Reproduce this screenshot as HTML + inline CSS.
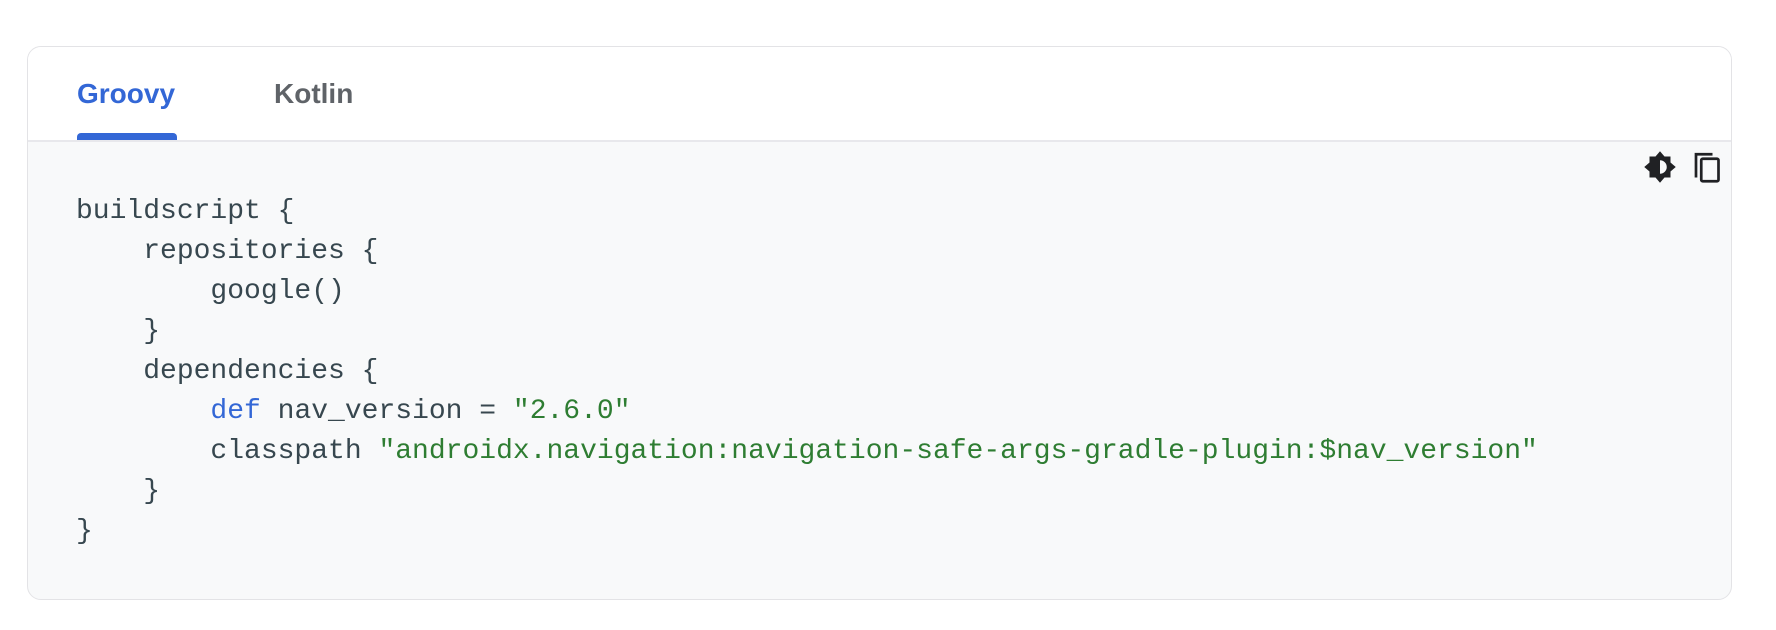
<!DOCTYPE html>
<html><head><style>
body{margin:0;width:1776px;height:630px;background:#fff;position:relative;overflow:hidden}
.card{position:absolute;left:27px;top:46px;width:1705px;height:554px;border:1px solid #e3e3e6;border-radius:14px;overflow:hidden;box-sizing:border-box;background:#f8f9fa}
.tabs{position:absolute;left:0;top:0;right:0;height:95px;box-sizing:border-box;background:#fff;border-bottom:2px solid #e8e8ec}
.tab{position:absolute;top:31px;font:bold 28px "Liberation Sans",sans-serif;}
.g{left:49px;color:#3367d6}
.k{left:246px;color:#5f6368}
.ul{position:absolute;left:49px;top:86px;width:100px;height:7px;background:#3367d6;border-radius:4px 4px 0 0}
pre{position:absolute;left:48px;top:145px;margin:0;font:28px/40px "Liberation Mono",monospace;color:#37474f}
.kw{color:#3367d6}.s{color:#2e7d32}
svg{position:absolute}
</style></head><body>
<div class="card">
<div class="tabs"><div class="tab g">Groovy</div><div class="tab k">Kotlin</div><div class="ul"></div></div>
<pre>buildscript {
    repositories {
        google()
    }
    dependencies {
        <span class="kw">def</span> nav_version = <span class="s">"2.6.0"</span>
        classpath <span class="s">"androidx.navigation:navigation-safe-args-gradle-plugin:$nav_version"</span>
    }
}</pre>
</div>
<svg style="left:1642px;top:149px" width="36" height="36" viewBox="0 0 24 24"><path fill="#202124" d="M12 1.5l3 3.5h4v4l3.5 3-3.5 3v4h-4l-3 3.5-3-3.5h-4v-4L1.5 12 5 9V5h4z"/><path fill="#f8f9fa" d="M12 7.5a4.5 4.5 0 0 1 0 9z"/></svg>
<svg style="left:1690px;top:149px" width="36" height="36" viewBox="0 0 24 24"><path fill="none" stroke="#202124" stroke-width="1.8" d="M4 19V3.5h11"/><rect x="7.5" y="6.5" width="11.5" height="15" rx="1" fill="none" stroke="#202124" stroke-width="1.8"/></svg>
</body></html>
